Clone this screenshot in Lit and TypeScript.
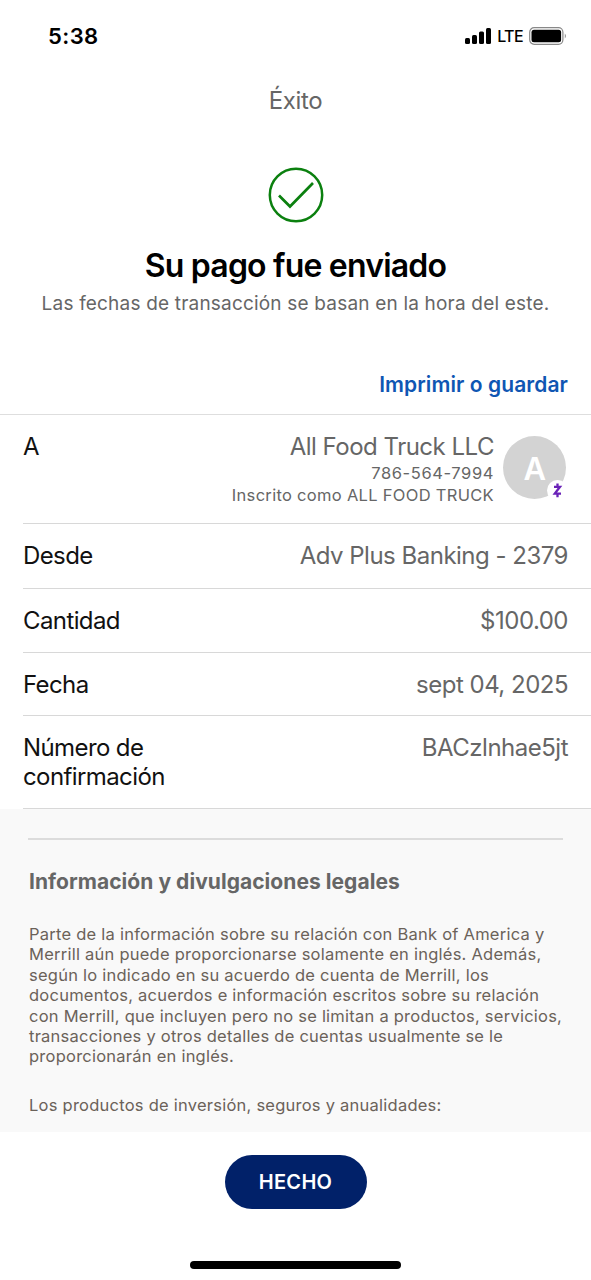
import { LitElement, html, css } from 'lit';
import { customElement, property } from 'lit/decorators.js';

@customElement('status-bar')
export class StatusBar extends LitElement {
  static styles = css`
    :host {
      display: flex;
      align-items: center;
      justify-content: space-between;
      height: 72px;
      padding: 0 23px 0 48px;
      box-sizing: border-box;
      color: #000;
    }

    .time {
      font-size: 22px;
      font-weight: 600;
      letter-spacing: 0.4px;
    }

    .signals {
      display: flex;
      align-items: center;
    }

    .network {
      font-size: 16px;
      font-weight: 500;
      letter-spacing: -0.6px;
      margin: 0 6px 0 5px;
    }

    svg {
      display: block;
    }
  `;

  render() {
    return html`
      <div class="time">5:38</div>
      <div class="signals">
        <svg width="27" height="18" viewBox="0 0 27 18">
          <rect x="0" y="11" width="5" height="6" rx="1.5" />
          <rect x="7" y="8" width="5" height="9" rx="1.5" />
          <rect x="14" y="4.5" width="5" height="12.5" rx="1.5" />
          <rect x="21" y="1" width="5" height="16" rx="1.5" />
        </svg>
        <span class="network">LTE</span>
        <svg width="39" height="18" viewBox="0 0 39 18">
          <rect x="0.7" y="0.7" width="33.2" height="16.6" rx="4.5" fill="none" stroke="#888" stroke-width="1.2" />
          <rect x="2.5" y="2.7" width="29.6" height="12.6" rx="2.5" />
          <path d="M35.8 6.5 Q38 9 35.8 11.5 Z" fill="#888" />
        </svg>
      </div>
    `;
  }
}

@customElement('detail-row')
export class DetailRow extends LitElement {
  @property() label = '';

  static styles = css`
    :host {
      display: flex;
      justify-content: space-between;
      margin-left: 23px;
      padding: 17px 23px 0 0;
      box-sizing: border-box;
      border-bottom: 1px solid #d8d8d8;
      font-size: 24px;
      line-height: 29px;
      letter-spacing: -0.5px;
      color: #666;
    }

    .label {
      width: 170px;
      color: #111;
      letter-spacing: -0.6px;
    }
  `;

  render() {
    return html`
      <div class="label">${this.label}</div>
      <slot></slot>
    `;
  }
}

@customElement('app-root')
export class AppRoot extends LitElement {
  static styles = css`
    :host {
      display: flex;
      flex-direction: column;
      height: 1280px;
      background: #fff;
      font-family: Inter, "Liberation Sans", sans-serif;
      color: #666;
      overflow: hidden;
    }

    .title {
      height: 56px;
      line-height: 57px;
      text-align: center;
      font-size: 24px;
      letter-spacing: -0.4px;
    }

    .hero {
      display: flex;
      flex-direction: column;
      align-items: center;
      height: 286px;
      padding-top: 39px;
      box-sizing: border-box;
    }

    .check {
      display: block;
    }

    h1 {
      margin: 23px 0 0;
      font-size: 32px;
      line-height: 40px;
      font-weight: 600;
      letter-spacing: -0.8px;
      color: #000;
      white-space: nowrap;
    }

    .note {
      margin-top: 6px;
      font-size: 19px;
      line-height: 24px;
      letter-spacing: 0.19px;
      white-space: nowrap;
    }

    .print {
      align-self: flex-end;
      margin: 56px 23px 0 0;
      font-size: 21px;
      line-height: 26px;
      font-weight: 600;
      letter-spacing: 0.08px;
      color: #0f56b3;
    }

    .details {
      border-top: 1px solid #dedede;
    }

    .to {
      height: 109px;
    }

    .from {
      height: 65px;
    }

    .amount {
      height: 64px;
    }

    .date {
      height: 63px;
    }

    .confirmation {
      height: 93px;
    }

    .payee {
      display: flex;
      gap: 9px;
      margin-right: 2px;
      text-align: right;
      white-space: nowrap;
    }

    .small {
      font-size: 16.5px;
      line-height: 22px;
    }

    .phone {
      padding-top: 1px;
      letter-spacing: 0.6px;
    }

    .enrolled {
      letter-spacing: 0.3px;
    }

    .avatar {
      position: relative;
      width: 63px;
      height: 63px;
      margin-top: 4px;
      border-radius: 50%;
      background: #d3d3d3;
      color: #fff;
      font-size: 31px;
      font-weight: 600;
      line-height: 65px;
      text-align: center;
    }

    .badge {
      position: absolute;
      right: -2px;
      bottom: -2px;
      width: 21px;
      height: 21px;
    }

    .legal {
      height: 323px;
      box-sizing: border-box;
      padding: 29px 28px 0;
      background: #f9f9f9;
      overflow: hidden;
    }

    .legal h2 {
      margin: 0;
      padding: 29px 0 0 1px;
      border-top: 2px solid #dcdcdc;
      font-size: 21px;
      line-height: 26px;
      font-weight: 700;
      letter-spacing: 0.05px;
      white-space: nowrap;
    }

    .legal p {
      margin: 29px 0 0 1px;
      font-size: 16.5px;
      line-height: 20.4px;
      letter-spacing: 0.24px;
      color: #6b6259;
      white-space: nowrap;
    }

    .legal p + p {
      margin-top: 28px;
    }

    .footer {
      flex: 1;
      display: flex;
      flex-direction: column;
      align-items: center;
      justify-content: space-between;
      padding: 23px 0 11px;
    }

    .done {
      width: 142px;
      height: 54px;
      padding: 0;
      border: 0;
      border-radius: 27px;
      background: #012169;
      color: #fff;
      font: 600 20px Inter, "Liberation Sans", sans-serif;
      letter-spacing: 0.3px;
    }

    .home {
      width: 211px;
      height: 8px;
      border-radius: 4px;
      background: #000;
    }
  `;

  render() {
    return html`
      <status-bar></status-bar>
      <div class="title">Éxito</div>

      <div class="hero">
        <svg class="check" width="56" height="56" viewBox="0 0 56 56" fill="none" stroke="#0b800f" stroke-width="2.5">
          <circle cx="28" cy="28" r="26.2" />
          <path d="M11 28.5 L22 39.5 L45 16" stroke-width="2.7" />
        </svg>
        <h1>Su pago fue enviado</h1>
        <div class="note">Las fechas de transacción se basan en la hora del este.</div>
        <div class="print">Imprimir o guardar</div>
      </div>

      <div class="details">
        <detail-row class="to" label="A">
          <div class="payee">
            <div>
              <div>All Food Truck LLC</div>
              <div class="small phone">786-564-7994</div>
              <div class="small enrolled">Inscrito como ALL FOOD TRUCK</div>
            </div>
            <div class="avatar">
              A
              <svg class="badge" viewBox="0 0 21 21">
                <circle cx="10.5" cy="10.5" r="10.5" fill="#fff" />
                <path d="M7 6.8 H13 L7.8 13.6 H14 M10.5 3.6 V6.4 M10.5 14 V17.2" fill="none" stroke="#6a22b8" stroke-width="2.3" />
              </svg>
            </div>
          </div>
        </detail-row>
        <detail-row class="from" label="Desde"><span>Adv Plus Banking - 2379</span></detail-row>
        <detail-row class="amount" label="Cantidad"><span>$100.00</span></detail-row>
        <detail-row class="date" label="Fecha"><span>sept 04, 2025</span></detail-row>
        <detail-row class="confirmation" label="Número de confirmación"><span>BACzlnhae5jt</span></detail-row>
      </div>

      <div class="legal">
        <h2>Información y divulgaciones legales</h2>
        <p>
          Parte de la información sobre su relación con Bank of America y<br />
          Merrill aún puede proporcionarse solamente en inglés. Además,<br />
          según lo indicado en su acuerdo de cuenta de Merrill, los<br />
          documentos, acuerdos e información escritos sobre su relación<br />
          con Merrill, que incluyen pero no se limitan a productos, servicios,<br />
          transacciones y otros detalles de cuentas usualmente se le<br />
          proporcionarán en inglés.
        </p>
        <p>Los productos de inversión, seguros y anualidades:</p>
      </div>

      <div class="footer">
        <button class="done">HECHO</button>
        <div class="home"></div>
      </div>
    `;
  }
}
